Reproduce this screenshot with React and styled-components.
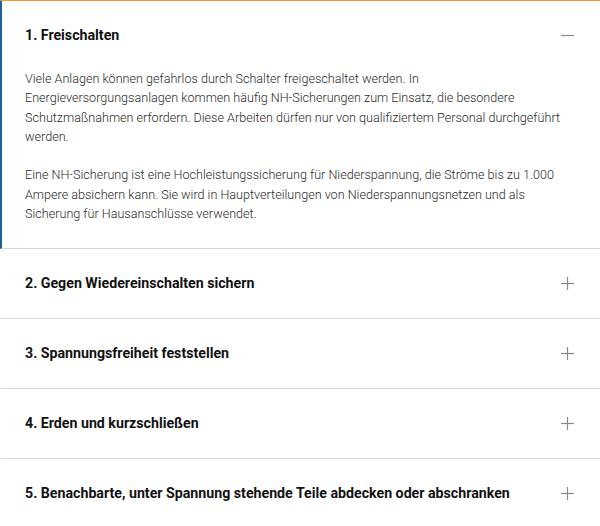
import React, { useState } from 'react';
import styled, { createGlobalStyle } from 'styled-components';

const GlobalStyle = createGlobalStyle`
    html, body {
        margin: 0;
        padding: 0;
        background: #fff;
    }
    body {
        font-family: Roboto, "Liberation Sans", sans-serif;
        -webkit-font-smoothing: antialiased;
    }
`;

// each paragraph is a list of lines, broken as in the original copy
const steps = [
    {
        title: '1. Freischalten',
        body: [
            [
                'Viele Anlagen können gefahrlos durch Schalter freigeschaltet werden. In',
                'Energieversorgungsanlagen kommen häufig NH-Sicherungen zum Einsatz, die besondere',
                'Schutzmaßnahmen erfordern. Diese Arbeiten dürfen nur von qualifiziertem Personal durchgeführt',
                'werden.',
            ],
            [
                'Eine NH-Sicherung ist eine Hochleistungssicherung für Niederspannung, die Ströme bis zu 1.000',
                'Ampere absichern kann. Sie wird in Hauptverteilungen von Niederspannungsnetzen und als',
                'Sicherung für Hausanschlüsse verwendet.',
            ],
        ],
    },
    { title: '2. Gegen Wiedereinschalten sichern', body: [] },
    { title: '3. Spannungsfreiheit feststellen', body: [] },
    { title: '4. Erden und kurzschließen', body: [] },
    { title: '5. Benachbarte, unter Spannung stehende Teile abdecken oder abschranken', body: [] },
];

export default function App() {
    const [openIndex, setOpenIndex] = useState(0);

    return (
        <>
            <GlobalStyle />
            <Accordion>
                {steps.map((step, index) => {
                    const isOpen = openIndex === index;
                    return (
                        <Item key={index} $open={isOpen}>
                            <Header onClick={() => setOpenIndex(isOpen ? -1 : index)}>
                                <Title>{step.title}</Title>
                                <Toggle>
                                    <svg width="13" height="13" viewBox="0 0 13 13">
                                        <path d="M0 6.5h13" stroke="#8a8a8a" strokeWidth="1.2" />
                                        {!isOpen && <path d="M6.5 0v13" stroke="#8a8a8a" strokeWidth="1.2" />}
                                    </svg>
                                </Toggle>
                            </Header>
                            {isOpen && (
                                <Panel>
                                    {step.body.map((lines, i) => (
                                        <p key={i}>
                                            {lines.map((line, j) => (
                                                <React.Fragment key={j}>
                                                    {j > 0 && <br />}
                                                    {line}
                                                </React.Fragment>
                                            ))}
                                        </p>
                                    ))}
                                </Panel>
                            )}
                        </Item>
                    );
                })}
            </Accordion>
        </>
    );
}

const Accordion = styled.div`
    width: 600px;
    border-top: 1px solid #f29235;
`;

const Item = styled.div`
    border-left: 2px solid ${props => (props.$open ? '#1f5f99' : 'transparent')};
    border-bottom: 1px solid #d6d6d6;
    &:last-child {
        border-bottom: none;
    }
`;

const Header = styled.div`
    display: flex;
    align-items: center;
    justify-content: space-between;
    padding: 24px 26px 25px 23px;
    cursor: pointer;
`;

const Title = styled.h3`
    margin: 0;
    font-size: 14.2px;
    line-height: 20px;
    font-weight: 700;
    color: #111;
`;

const Toggle = styled.span`
    display: flex;
    width: 13px;
    height: 13px;
`;

const Panel = styled.div`
    margin-top: -1px;
    padding: 0 20px 25px 23px;
    p {
        margin: 0 0 19.3px;
        font-size: 12.6px;
        line-height: 19.3px;
        font-weight: 300;
        white-space: nowrap;
        color: #2a2a2a;
    }
    p:last-child {
        margin-bottom: 0;
    }
`;
